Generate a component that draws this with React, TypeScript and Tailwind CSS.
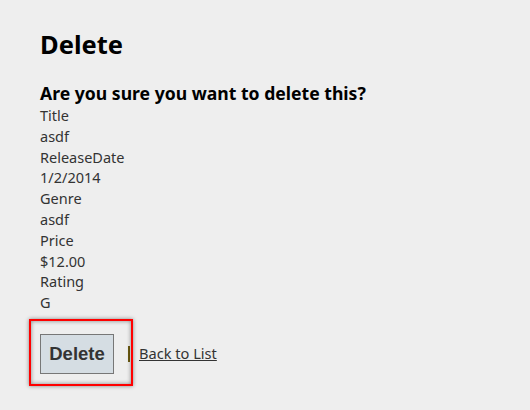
const fields: [string, string][] = [
  ['Title', 'asdf'],
  ['ReleaseDate', '1/2/2014'],
  ['Genre', 'asdf'],
  ['Price', '$12.00'],
  ['Rating', 'G'],
];

export default function App() {
  return (
    <div className="min-h-screen bg-[#eeeeee] pl-10 pt-[27px] text-[#333] font-['Noto_Sans',sans-serif]">
      <h1 className="text-[25.5px] font-bold leading-[34px] text-black">Delete</h1>
      <h3 className="mt-[20px] text-[17.6px] font-bold leading-[24px] text-black">
        Are you sure you want to delete this?
      </h3>
      <div className="text-[14.5px] leading-[20.8px]">
        {fields.map(([label, value]) => (
          <div key={label}>
            <div>{label}</div>
            <div>{value}</div>
          </div>
        ))}
      </div>
      <div className="mt-[21px] flex items-center">
        <div className="relative">
          <button className="h-10 w-[74px] border border-[#777] bg-[#d5dde3] text-[18.5px] font-bold text-[#333] font-['Liberation_Sans',sans-serif]">
            Delete
          </button>
          <div className="pointer-events-none absolute -left-[11px] -top-[15px] h-[67px] w-[104px] border-2 border-[#ff0000] shadow-[0_0_4px_rgba(0,0,0,0.45),inset_0_0_4px_rgba(0,0,0,0.45)]" />
        </div>
        <span className="ml-[14px] h-4 w-[2px] bg-[#6b5a10]" />
        <a href="#" className="ml-[9px] text-[14.6px] text-[#333] underline">
          Back to List
        </a>
      </div>
    </div>
  );
}
